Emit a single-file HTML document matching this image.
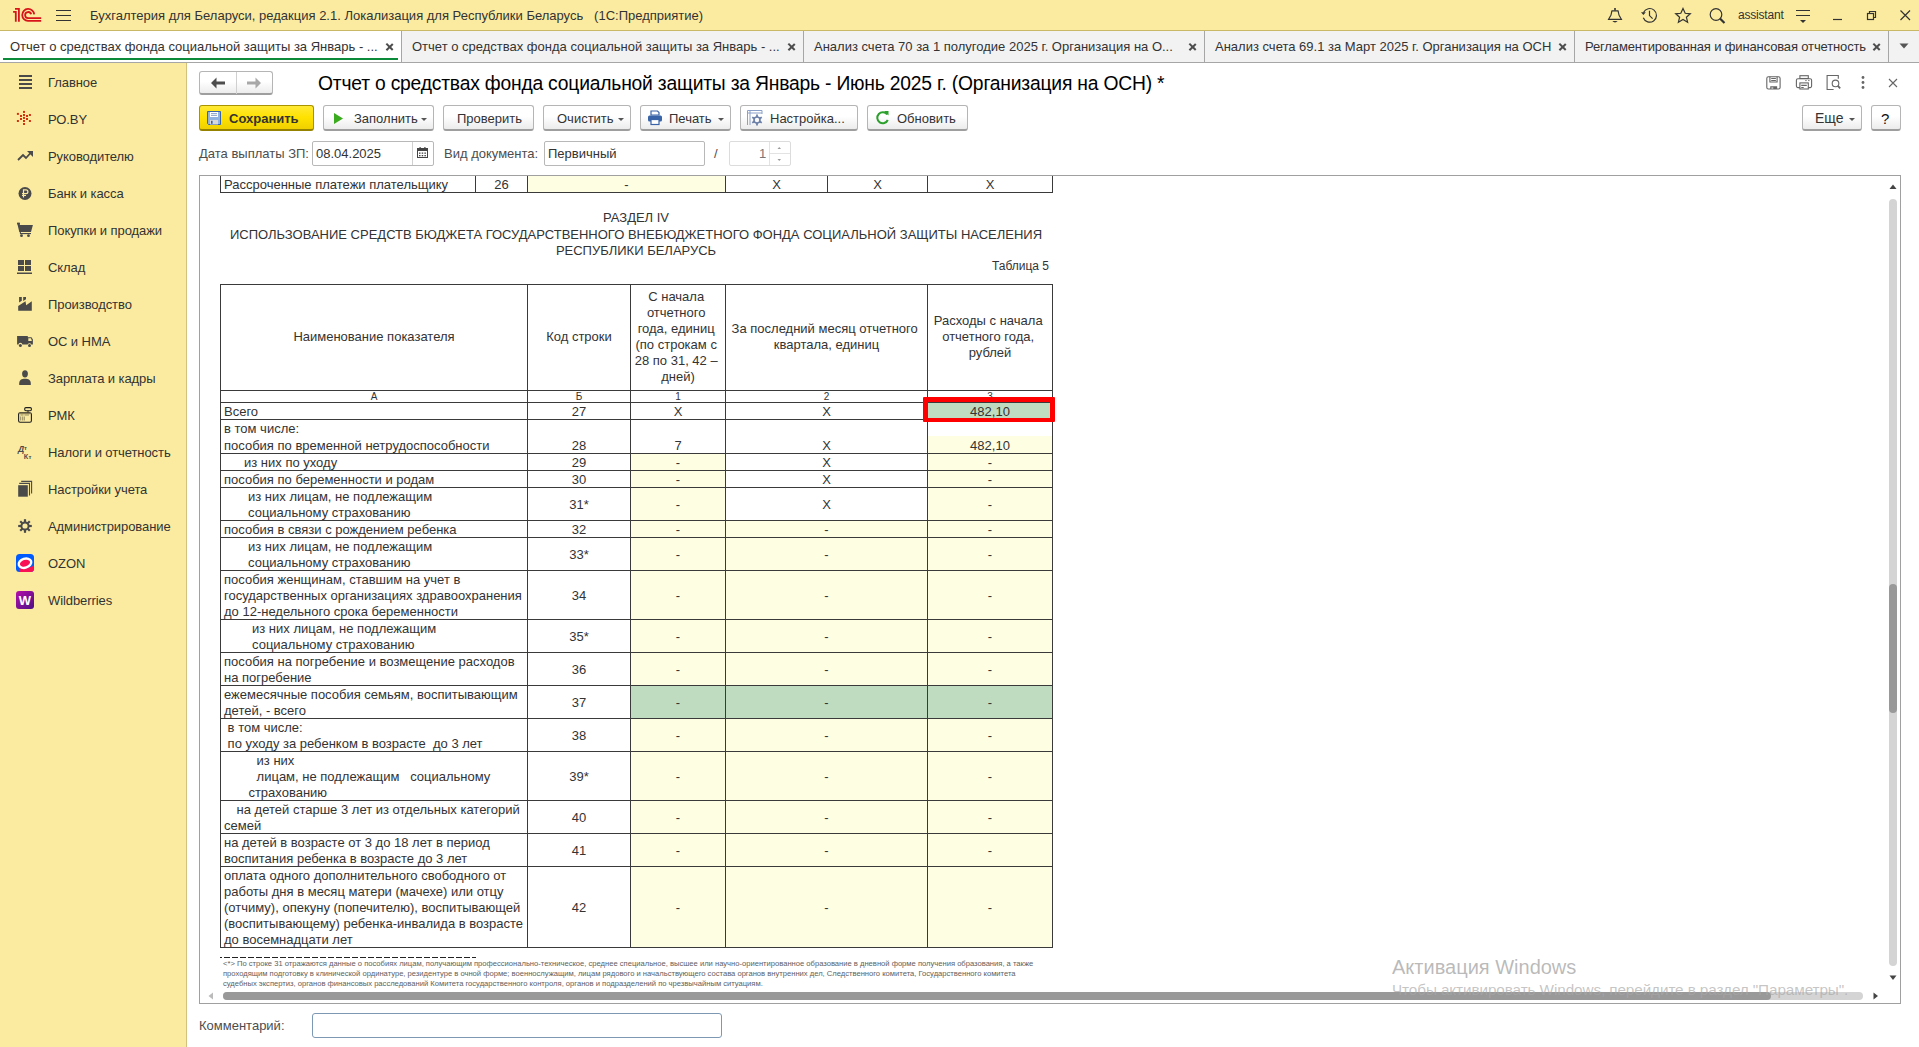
<!DOCTYPE html><html><head><meta charset="utf-8"><title>1C</title><style>
*{box-sizing:border-box}
body{margin:0;width:1919px;height:1047px;overflow:hidden;position:relative;font-family:"Liberation Sans",sans-serif;font-size:13px;color:#333;background:#fff}
.a{position:absolute}
.t{white-space:pre}
.btn{position:absolute;height:26px;border:1px solid #b5b5b5;border-bottom:2px solid #9e9e9e;border-radius:3px;background:linear-gradient(#ffffff,#ffffff 45%,#ececec)}
.cell{position:absolute;display:flex;align-items:center;justify-content:center;text-align:center;line-height:16px;white-space:pre;color:#333}
.l{justify-content:flex-start;text-align:left}
.b{align-items:flex-end}
.hl{position:absolute;height:1px;background:#3a3a3a}
.vl{position:absolute;width:1px;background:#3a3a3a}
.x{position:absolute;width:8px;height:8px}
.x:before,.x:after{content:"";position:absolute;left:-1px;top:2.6px;width:9.4px;height:1.9px;background:#4d4d4d;transform:rotate(45deg)}
.x:after{transform:rotate(-45deg)}
</style></head><body>
<div class="a" style="left:0px;top:0px;width:1919px;height:30px;background:#fbeba0"></div>
<div class="a" style="left:0px;top:30px;width:1919px;height:1px;background:#c9b866"></div>
<svg class="a" style="left:0;top:0" width="50" height="30" viewBox="0 0 50 30">
<g fill="none" stroke="#d7141a" stroke-width="1.8">
<path d="M13.1 11.9 H15.8 V21.8"/>
<path d="M15 8.9 H18.9 V21.8"/>
<path d="M34.2 14.3 A6 6 0 1 0 28 20.9 H41.2"/>
<path d="M31.2 14.3 A3.1 3.1 0 1 0 28.1 18.2 H41.2"/>
</g></svg>
<div class="a" style="left:56px;top:10px;width:15px;height:1px;background:#333"></div>
<div class="a" style="left:56px;top:15px;width:15px;height:1px;background:#333"></div>
<div class="a" style="left:56px;top:20px;width:15px;height:1px;background:#333"></div>
<div class="a t" style="left:90px;top:9px;font-size:13px;line-height:1;color:#333">Бухгалтерия для Беларуси, редакция 2.1. Локализация для Республики Беларусь   (1С:Предприятие)</div>
<svg class="a" style="left:1600px;top:0" width="319" height="30" viewBox="1600 0 319 30">
<g fill="none" stroke="#333" stroke-width="1.2">
<path d="M1608.6 19.3 L1610.9 15.3 C1611.4 14.2 1611.4 12 1612 10.9 H1618 C1618.6 12 1618.6 14.2 1619.1 15.3 L1621.4 19.3 Z"/>
<path d="M1643.5 12.5 A6.8 6.8 0 1 1 1643.3 17.7"/>
<path d="M1649.5 10.8 V15.6 L1652.6 18.6"/>
<path d="M1683 8.5 L1685.2 13.3 L1690.3 13.8 L1686.4 17.2 L1687.6 22.2 L1683 19.5 L1678.4 22.2 L1679.6 17.2 L1675.7 13.8 L1680.8 13.3 Z"/>
<circle cx="1716" cy="14.5" r="5.8"/>
</g>
<path d="M1612.3 21.1 H1617.7 Q1615 23.8 1612.3 21.1 Z" fill="#333"/>
<rect x="1614.2" y="8" width="1.6" height="2.5" fill="#333"/>
<path d="M1641 12.2 H1645.8 L1643.4 14.9 Z" fill="#333"/>
<path d="M1720 18.5 L1724.5 23" stroke="#333" stroke-width="2.2"/>
<g stroke="#333" stroke-width="1.2" fill="none">
<path d="M1796 10.5 H1810 M1796 15.5 H1810"/>
<path d="M1833 19.5 H1842"/>
<rect x="1867.5" y="13.5" width="6" height="6"/>
<path d="M1869.5 13.5 V11.5 H1875.5 V17.5 H1873.5"/>
<path d="M1900.5 10.5 L1910 20 M1910 10.5 L1900.5 20"/>
</g>
<path d="M1800 20 H1806 L1803 23 Z" fill="#333"/>
</svg>
<div class="a t" style="left:1738px;top:9px;font-size:12px;line-height:1;color:#333;letter-spacing:-0.2px">assistant</div>
<div class="a" style="left:0px;top:31px;width:1919px;height:31px;background:#f2f2f2"></div>
<div class="a" style="left:0px;top:31px;width:401px;height:31px;background:#fff"></div>
<div class="a" style="left:0px;top:62px;width:1919px;height:1px;background:#a6a6a6"></div>
<div class="a" style="left:3px;top:58px;width:395px;height:2px;background:#0b8a3a"></div>
<div class="a" style="left:401px;top:31px;width:1px;height:31px;background:#a6a6a6"></div>
<div class="a" style="left:803px;top:31px;width:1px;height:31px;background:#a6a6a6"></div>
<div class="a" style="left:1204px;top:31px;width:1px;height:31px;background:#a6a6a6"></div>
<div class="a" style="left:1574px;top:31px;width:1px;height:31px;background:#a6a6a6"></div>
<div class="a" style="left:1888px;top:31px;width:1px;height:31px;background:#a6a6a6"></div>
<div class="a t" style="left:10px;top:40px;font-size:13px;line-height:1;color:#333">Отчет о средствах фонда социальной защиты за Январь - ...</div>
<div class="x" style="left:386px;top:43px"></div>
<div class="a t" style="left:412px;top:40px;font-size:13px;line-height:1;color:#333">Отчет о средствах фонда социальной защиты за Январь - ...</div>
<div class="x" style="left:788px;top:43px"></div>
<div class="a t" style="left:814px;top:40px;font-size:13px;line-height:1;color:#333">Анализ счета 70 за 1 полугодие 2025 г. Организация на О...</div>
<div class="x" style="left:1189px;top:43px"></div>
<div class="a t" style="left:1215px;top:40px;font-size:13px;line-height:1;color:#333">Анализ счета 69.1 за Март 2025 г. Организация на ОСН</div>
<div class="x" style="left:1559px;top:43px"></div>
<div class="a t" style="left:1585px;top:40px;font-size:13px;line-height:1;color:#333;letter-spacing:-0.14px">Регламентированная и финансовая отчетность</div>
<div class="x" style="left:1873px;top:43px"></div>
<svg class="a" style="left:1899px;top:43px" width="10" height="6"><path d="M0.5 0.5 H9.5 L5 5.5 Z" fill="#555"/></svg>
<div class="a" style="left:0px;top:63px;width:186px;height:984px;background:#fbeba0"></div>
<div class="a" style="left:186px;top:63px;width:1px;height:984px;background:#d2c27e"></div>
<div class="a t" style="left:48px;top:76px;font-size:13px;line-height:1;color:#333;letter-spacing:-0.08px">Главное</div>
<div class="a t" style="left:48px;top:113px;font-size:13px;line-height:1;color:#333;letter-spacing:-0.08px">РО.BY</div>
<div class="a t" style="left:48px;top:150px;font-size:13px;line-height:1;color:#333;letter-spacing:-0.08px">Руководителю</div>
<div class="a t" style="left:48px;top:187px;font-size:13px;line-height:1;color:#333;letter-spacing:-0.08px">Банк и касса</div>
<div class="a t" style="left:48px;top:224px;font-size:13px;line-height:1;color:#333;letter-spacing:-0.08px">Покупки и продажи</div>
<div class="a t" style="left:48px;top:261px;font-size:13px;line-height:1;color:#333;letter-spacing:-0.08px">Склад</div>
<div class="a t" style="left:48px;top:298px;font-size:13px;line-height:1;color:#333;letter-spacing:-0.08px">Производство</div>
<div class="a t" style="left:48px;top:335px;font-size:13px;line-height:1;color:#333;letter-spacing:-0.08px">ОС и НМА</div>
<div class="a t" style="left:48px;top:372px;font-size:13px;line-height:1;color:#333;letter-spacing:-0.08px">Зарплата и кадры</div>
<div class="a t" style="left:48px;top:409px;font-size:13px;line-height:1;color:#333;letter-spacing:-0.08px">РМК</div>
<div class="a t" style="left:48px;top:446px;font-size:13px;line-height:1;color:#333;letter-spacing:-0.08px">Налоги и отчетность</div>
<div class="a t" style="left:48px;top:483px;font-size:13px;line-height:1;color:#333;letter-spacing:-0.08px">Настройки учета</div>
<div class="a t" style="left:48px;top:520px;font-size:13px;line-height:1;color:#333;letter-spacing:-0.08px">Администрирование</div>
<div class="a t" style="left:48px;top:557px;font-size:13px;line-height:1;color:#333;letter-spacing:-0.08px">OZON</div>
<div class="a t" style="left:48px;top:594px;font-size:13px;line-height:1;color:#333;letter-spacing:-0.08px">Wildberries</div>
<svg class="a" style="left:0;top:0" width="186" height="640" viewBox="0 0 186 640"><rect x="19" y="75" width="13" height="2" fill="#4a4a4a"/><rect x="19" y="79" width="13" height="2" fill="#4a4a4a"/><rect x="19" y="83" width="13" height="2" fill="#4a4a4a"/><rect x="19" y="87" width="13" height="2" fill="#4a4a4a"/><rect x="23" y="110.9" width="2" height="2" fill="#d2300f"/><rect x="16.9" y="112.9" width="2" height="2" fill="#d2300f"/><rect x="28.9" y="114" width="2" height="2" fill="#d2300f"/><rect x="20" y="115" width="2" height="2" fill="#d2300f"/><rect x="23" y="114" width="2" height="2" fill="#d2300f"/><rect x="26" y="115" width="2" height="2" fill="#d2300f"/><rect x="20" y="118" width="2" height="2" fill="#d2300f"/><rect x="23" y="116.9" width="2" height="2" fill="#d2300f"/><rect x="26" y="118" width="2" height="2" fill="#d2300f"/><rect x="16.9" y="120" width="2" height="2" fill="#d2300f"/><rect x="28.9" y="120" width="2" height="2" fill="#d2300f"/><rect x="23" y="120" width="2" height="2" fill="#d2300f"/><rect x="23" y="123" width="2" height="2" fill="#d2300f"/><path d="M18 160 L23 155 L26 158 L31 152.5" fill="none" stroke="#4a4a4a" stroke-width="1.8"/><path d="M27 151 H33 V157 Z" fill="#4a4a4a"/><circle cx="25" cy="193.5" r="6.5" fill="#4a4a4a"/><path d="M23.5 197.5 V189.8 H26 A1.9 1.9 0 0 1 26 193.6 H22 M22 195.5 H26" fill="none" stroke="#fbeba0" stroke-width="1.2"/><path d="M17.1 222.8 H19.8 V225 H32.9 L31 231.9 H19.3 Z" fill="#4a4a4a"/><rect x="17.1" y="222.8" width="2.7" height="1.6" fill="#4a4a4a"/><rect x="20" y="233" width="11" height="1.1" fill="#4a4a4a"/><rect x="19.8" y="231.5" width="1.1" height="2" fill="#4a4a4a"/><circle cx="21.5" cy="235.7" r="1.4" fill="#4a4a4a"/><circle cx="28.5" cy="235.7" r="1.4" fill="#4a4a4a"/><rect x="18" y="260" width="6" height="5" fill="#4a4a4a"/><rect x="25" y="260" width="6" height="5" fill="#4a4a4a"/><rect x="18" y="266" width="6" height="5" fill="#4a4a4a"/><rect x="25" y="266" width="6" height="5" fill="#4a4a4a"/><rect x="17" y="272.5" width="15" height="1.5" fill="#4a4a4a"/><path d="M18.2 310.8 V306 L25.5 301.2 L26.2 305.2 L31.8 301.2 V310.8 Z" fill="#4a4a4a"/><path d="M19.1 297.1 H21.8 V300.8 L19.1 302.6 Z M23.2 297.1 H26 V299.2 L23.2 300.9 Z" fill="#4a4a4a"/><path d="M17.1 336.1 H27.8 V337.2 H31.5 L32.9 339.5 V344.6 H31.3 A1.9 1.9 0 0 0 27.7 344.6 H22.3 A1.9 1.9 0 0 0 18.5 344.6 H17.1 Z" fill="#4a4a4a"/><path d="M28.3 338.2 H31 L31.9 340.9 H28.3 Z" fill="#fbeba0"/><circle cx="20.4" cy="345.4" r="1.5" fill="#4a4a4a"/><circle cx="29.5" cy="345.4" r="1.5" fill="#4a4a4a"/><ellipse cx="25" cy="373.8" rx="2.9" ry="3.6" fill="#4a4a4a"/><path d="M19.2 385 V383.5 C19.2 380.2 21.5 378.8 25 378.8 C28.5 378.8 30.8 380.2 30.8 383.5 V385 Z" fill="#4a4a4a"/><rect x="18.6" y="412.7" width="12.8" height="9.5" rx="1.5" fill="none" stroke="#1e1e1e" stroke-width="1.1"/><rect x="24.7" y="407.6" width="6.7" height="3.2" rx="1.2" fill="none" stroke="#1e1e1e" stroke-width="1.1"/><rect x="27.5" y="410.6" width="1" height="2" fill="#1e1e1e"/><path d="M19.5 413.5 H30.5" stroke="#8a7f55" stroke-width="1.4"/><path d="M20.5 415 H23.5 M24.5 415 H29" stroke="#9a8f60" stroke-width="1.2"/><path d="M20.7 416.5 V420.5 M22.7 416.5 V420.5 M24.3 416.5 V420.5" stroke="#8a7f55" stroke-width="0.9"/><text x="18" y="451.6" font-family="Liberation Sans" font-size="8.5" font-style="italic" font-weight="bold" fill="#4a4a4a">Д</text><text x="24" y="450.2" font-family="Liberation Sans" font-size="6" font-weight="bold" fill="#4a4a4a">т</text><text x="23.8" y="458.8" font-family="Liberation Sans" font-size="7.2" font-weight="bold" fill="#4a4a4a">К</text><text x="28.6" y="458.8" font-family="Liberation Sans" font-size="6" font-weight="bold" fill="#4a4a4a">т</text><rect x="18.2" y="485.2" width="9.6" height="11.5" fill="#4a4a4a"/><path d="M19.2 483.4 H29.5 V495.6 M21.2 481.4 H31.6 V493.4" fill="none" stroke="#4a4a4a" stroke-width="1.1"/><g transform="translate(25 526)"><circle r="3.6" fill="none" stroke="#4a4a4a" stroke-width="2"/><rect x="-1.1" y="-6.8" width="2.2" height="3" fill="#4a4a4a" transform="rotate(0)"/><rect x="-1.1" y="-6.8" width="2.2" height="3" fill="#4a4a4a" transform="rotate(45)"/><rect x="-1.1" y="-6.8" width="2.2" height="3" fill="#4a4a4a" transform="rotate(90)"/><rect x="-1.1" y="-6.8" width="2.2" height="3" fill="#4a4a4a" transform="rotate(135)"/><rect x="-1.1" y="-6.8" width="2.2" height="3" fill="#4a4a4a" transform="rotate(180)"/><rect x="-1.1" y="-6.8" width="2.2" height="3" fill="#4a4a4a" transform="rotate(225)"/><rect x="-1.1" y="-6.8" width="2.2" height="3" fill="#4a4a4a" transform="rotate(270)"/><rect x="-1.1" y="-6.8" width="2.2" height="3" fill="#4a4a4a" transform="rotate(315)"/></g><clipPath id="oz"><rect x="16" y="554" width="18" height="18" rx="3.5"/></clipPath><g clip-path="url(#oz)"><rect x="16" y="554" width="18" height="18" fill="#005bff"/><path d="M19.2 573 V568.2 C25 568.8 30 567.5 34 565.5 V573 Z" fill="#f91155"/><ellipse cx="25" cy="563.2" rx="6.4" ry="4.5" fill="#f91155" stroke="#fff" stroke-width="2.4" transform="rotate(-18 25 563.2)"/></g><defs><linearGradient id="wb" x1="0" y1="0" x2="1" y2="1"><stop offset="0" stop-color="#b50fa9"/><stop offset="1" stop-color="#4b1183"/></linearGradient></defs><rect x="16" y="591" width="18" height="18" rx="3" fill="url(#wb)"/><text x="25" y="605" text-anchor="middle" font-family="Liberation Sans" font-weight="bold" font-size="13" fill="#fff">W</text></svg>
<div class="btn" style="left:199px;top:71px;width:74px;height:24px"></div>
<div class="a" style="left:236px;top:72px;width:1px;height:22px;background:#d0d0d0"></div>
<svg class="a" style="left:208px;top:76px" width="60" height="14"><path d="M3 7 L8.5 1.5 V5.5 H17 V8.5 H8.5 V12.5 Z" fill="#4d4d4d"/><path d="M53 7 L47.5 1.5 V5.5 H39 V8.5 H47.5 V12.5 Z" fill="#a8a8a8"/></svg>
<div class="a t" style="left:318px;top:74px;font-size:19.3px;line-height:1;color:#000;letter-spacing:-0.2px">Отчет о средствах фонда социальной защиты за Январь - Июнь 2025 г. (Организация на ОСН) *</div>
<svg class="a" style="left:1760px;top:70px" width="150" height="28" viewBox="1760 70 150 28">
<g fill="none" stroke="#666" stroke-width="1.1">
<rect x="1766.8" y="76.8" width="13.3" height="12.2" rx="1.6"/>
<path d="M1769.9 76.8 V82 H1777.1 V76.8"/>
<path d="M1771.2 78.5 H1775.9 M1771.2 80.5 H1775.9"/>
<path d="M1770.8 89 V86.9 H1776.6 V89"/>
<rect x="1799.9" y="75.7" width="8.4" height="2.8"/>
<path d="M1799.9 87.6 H1797.9 A1.5 1.5 0 0 1 1796.4 86.1 V80.2 A1.5 1.5 0 0 1 1797.9 78.7 H1810.1 A1.5 1.5 0 0 1 1811.6 80.2 V86.1 A1.5 1.5 0 0 1 1810.1 87.6 H1808.3"/>
<rect x="1799.9" y="82.9" width="8.4" height="6.1"/>
<path d="M1801.2 85.4 H1806.8 M1801.2 87.5 H1803.7"/>
<path d="M1833.6 89.5 H1827.1 V75.5 H1838.3 V78.7"/>
<circle cx="1835.5" cy="83.4" r="3.3"/>
<path d="M1837.9 85.9 L1840.2 88.3" stroke-width="1.8"/>
<path d="M1889 79 L1897 87 M1897 79 L1889 87"/>
</g>
<rect x="1773.3" y="87" width="3" height="2" fill="#666"/>
<path d="M1805.3 80.6 H1806.6 M1808.2 80.6 H1809.5" stroke="#666" stroke-width="1"/>
<circle cx="1863" cy="77.5" r="1.4" fill="#666"/><circle cx="1863" cy="82.5" r="1.4" fill="#666"/><circle cx="1863" cy="87.5" r="1.4" fill="#666"/>
</svg>
<div class="a" style="left:199px;top:105px;width:115px;height:26px;border:1px solid #a99400;border-bottom:2px solid #958300;border-radius:3px;background:linear-gradient(#ffe936,#ffe200 50%,#f0d000)"></div>
<svg class="a" style="left:207px;top:111px" width="15" height="15" viewBox="0 0 15 15">
<path d="M0.5 0.5 H13.5 V13.5 H1.5 L0.5 12.5 Z" fill="#8fb2e0" stroke="#3a64a8" stroke-width="1"/>
<rect x="3" y="1" width="8" height="5" fill="#fff"/><path d="M4 2.6 H10 M4 4.4 H10" stroke="#6b8cc0" stroke-width="0.8"/>
<rect x="3" y="9" width="8" height="4.5" fill="#d8d8d8"/><rect x="4" y="9.8" width="1.6" height="3" fill="#3a64a8"/>
</svg>
<div class="a t" style="left:229px;top:112px;font-size:13px;line-height:1;color:#333;font-weight:bold">Сохранить</div>
<div class="btn" style="left:323px;top:105px;width:111px"></div>
<div class="a t" style="left:354px;top:112px;font-size:13px;line-height:1;color:#333">Заполнить</div>
<svg class="a" style="left:421px;top:118px" width="7" height="4"><path d="M0 0 H6 L3 3 Z" fill="#555"/></svg>
<svg class="a" style="left:333px;top:112px" width="11" height="13"><path d="M1 1 L10 6.5 L1 12 Z" fill="#3aaa1e"/></svg>
<div class="btn" style="left:443px;top:105px;width:91px"></div>
<div class="a t" style="left:457px;top:112px;font-size:13px;line-height:1;color:#333">Проверить</div>
<div class="btn" style="left:543px;top:105px;width:88px"></div>
<div class="a t" style="left:557px;top:112px;font-size:13px;line-height:1;color:#333">Очистить</div>
<svg class="a" style="left:618px;top:118px" width="7" height="4"><path d="M0 0 H6 L3 3 Z" fill="#555"/></svg>
<div class="btn" style="left:640px;top:105px;width:91px"></div>
<div class="a t" style="left:669px;top:112px;font-size:13px;line-height:1;color:#333">Печать</div>
<svg class="a" style="left:718px;top:118px" width="7" height="4"><path d="M0 0 H6 L3 3 Z" fill="#555"/></svg>
<svg class="a" style="left:647px;top:110px" width="16" height="16" viewBox="0 0 16 16"><path d="M4 1 H10.5 L12 2.5 V5 H4 Z" fill="none" stroke="#3a64a8" stroke-width="1.2"/><rect x="1" y="5.5" width="14" height="6" rx="1.5" fill="#3a64a8"/><rect x="4" y="9.5" width="8" height="5" fill="#fff" stroke="#3a64a8" stroke-width="1.2"/></svg>
<div class="btn" style="left:740px;top:105px;width:118px"></div>
<div class="a t" style="left:770px;top:112px;font-size:13px;line-height:1;color:#333">Настройка...</div>
<svg class="a" style="left:747px;top:110px" width="18" height="16" viewBox="0 0 18 16"><path d="M0.5 15 V0.5 H15 V4" fill="none" stroke="#8aa0c8" stroke-width="1"/><path d="M0.5 3 H15 M3 0.5 V15" stroke="#8aa0c8" stroke-width="1" fill="none"/><g transform="translate(10 10)"><circle r="3" fill="none" stroke="#6a7fa8" stroke-width="1.6"/><g fill="#6a7fa8"><rect x="-0.9" y="-5.5" width="1.8" height="2.5"/><rect x="-0.9" y="-5.5" width="1.8" height="2.5" transform="rotate(60)"/><rect x="-0.9" y="-5.5" width="1.8" height="2.5" transform="rotate(120)"/><rect x="-0.9" y="-5.5" width="1.8" height="2.5" transform="rotate(180)"/><rect x="-0.9" y="-5.5" width="1.8" height="2.5" transform="rotate(240)"/><rect x="-0.9" y="-5.5" width="1.8" height="2.5" transform="rotate(300)"/></g></g></svg>
<div class="btn" style="left:867px;top:105px;width:101px"></div>
<div class="a t" style="left:897px;top:112px;font-size:13px;line-height:1;color:#333">Обновить</div>
<svg class="a" style="left:875px;top:110px" width="15" height="16" viewBox="0 0 15 16"><path d="M12.2 4.5 A5.5 5.5 0 1 0 12.8 10" fill="none" stroke="#2ca02c" stroke-width="2"/><path d="M9 1 L13.5 1 V5.5 Z" fill="#2ca02c"/></svg>
<div class="btn" style="left:1802px;top:105px;width:60px"></div>
<div class="a t" style="left:1815px;top:111px;font-size:14px;line-height:1;color:#333">Еще</div>
<svg class="a" style="left:1849px;top:118px" width="7" height="4"><path d="M0 0 H6 L3 3 Z" fill="#555"/></svg>
<div class="btn" style="left:1871px;top:105px;width:30px"></div>
<div class="a t" style="left:1881px;top:111px;font-size:15px;line-height:1;color:#111">?</div>
<div class="a t" style="left:199px;top:147px;font-size:13px;line-height:1;color:#4d4d4d">Дата выплаты ЗП:</div>
<div class="a" style="left:312px;top:141px;width:122px;height:25px;border:1px solid #b8b8b8;border-radius:2px;background:#fff"></div>
<div class="a" style="left:412px;top:142px;width:1px;height:23px;background:#d0d0d0"></div>
<div class="a t" style="left:316px;top:147px;font-size:13px;line-height:1;color:#333">08.04.2025</div>
<svg class="a" style="left:417px;top:147px" width="12" height="12" viewBox="0 0 12 12"><rect x="0.5" y="1.5" width="10" height="9" fill="none" stroke="#444" stroke-width="1"/><rect x="0.5" y="1.5" width="10" height="2.5" fill="#444"/><rect x="2.5" y="0" width="1.2" height="2" fill="#444"/><rect x="7.3" y="0" width="1.2" height="2" fill="#444"/><g fill="#444"><rect x="2" y="5.5" width="1.5" height="1.3"/><rect x="4.7" y="5.5" width="1.5" height="1.3"/><rect x="7.4" y="5.5" width="1.5" height="1.3"/><rect x="2" y="8" width="1.5" height="1.3"/><rect x="4.7" y="8" width="1.5" height="1.3"/><rect x="7.4" y="8" width="1.5" height="1.3"/></g></svg>
<div class="a t" style="left:444px;top:147px;font-size:13px;line-height:1;color:#4d4d4d">Вид документа:</div>
<div class="a" style="left:544px;top:141px;width:161px;height:25px;border:1px solid #b8b8b8;border-radius:2px;background:#fff"></div>
<div class="a t" style="left:548px;top:147px;font-size:13px;line-height:1;color:#333">Первичный</div>
<div class="a t" style="left:714px;top:147px;font-size:13px;line-height:1;color:#4d4d4d">/</div>
<div class="a" style="left:729px;top:141px;width:62px;height:25px;border:1px solid #dcdcdc;border-radius:2px;background:#fff"></div>
<div class="a" style="left:769px;top:142px;width:1px;height:23px;background:#e3e3e3"></div>
<div class="a" style="left:770px;top:153px;width:20px;height:1px;background:#e3e3e3"></div>
<div class="a t" style="left:759px;top:147px;font-size:13px;line-height:1;color:#777">1</div>
<svg class="a" style="left:776px;top:146px" width="7" height="18"><path d="M1.5 3 H5 L3.25 1 Z M1.5 13 H5 L3.25 15 Z" fill="#999"/></svg>
<div class="a" style="left:199px;top:175px;width:1702px;height:829px;border:1px solid #a0a0a0;background:#fff"></div>
<div class="a" style="left:200px;top:176px;width:1700px;height:827px;overflow:hidden" id="sheet">
<div class="cell l" style="left:21px;top:-1px;width:254px;height:17px;padding-left:3px"><span style="position:relative;top:1px">Рассроченные платежи плательщику</span></div>
<div class="cell " style="left:276px;top:-1px;width:51px;height:17px"><span style="position:relative;top:1px">26</span></div>
<div class="cell " style="left:328px;top:-1px;width:197px;height:17px;background:#fefee2"><span style="position:relative;top:1px">-</span></div>
<div class="cell " style="left:526px;top:-1px;width:101px;height:17px"><span style="position:relative;top:1px">X</span></div>
<div class="cell " style="left:628px;top:-1px;width:99px;height:17px"><span style="position:relative;top:1px">X</span></div>
<div class="cell " style="left:728px;top:-1px;width:124px;height:17px"><span style="position:relative;top:1px">X</span></div>
<div class="hl" style="left:20px;top:16px;width:833px"></div>
<div class="vl" style="left:20px;top:-1px;height:18px"></div>
<div class="vl" style="left:275px;top:-1px;height:18px"></div>
<div class="vl" style="left:327px;top:-1px;height:18px"></div>
<div class="vl" style="left:525px;top:-1px;height:18px"></div>
<div class="vl" style="left:627px;top:-1px;height:18px"></div>
<div class="vl" style="left:727px;top:-1px;height:18px"></div>
<div class="vl" style="left:852px;top:-1px;height:18px"></div>
<div class="a t" style="left:20px;top:34px;width:832px;text-align:center;line-height:16.5px;color:#333">РАЗДЕЛ IV
ИСПОЛЬЗОВАНИЕ СРЕДСТВ БЮДЖЕТА ГОСУДАРСТВЕННОГО ВНЕБЮДЖЕТНОГО ФОНДА СОЦИАЛЬНОЙ ЗАЩИТЫ НАСЕЛЕНИЯ
РЕСПУБЛИКИ БЕЛАРУСЬ</div>
<div class="a t" style="left:700px;top:84px;width:149px;text-align:right;font-size:12px;line-height:12px;color:#333">Таблица 5</div>
<div class="cell " style="left:21px;top:109px;width:306px;height:105px"><span style="position:relative;top:-1px">Наименование показателя</span></div>
<div class="cell " style="left:328px;top:109px;width:102px;height:105px"><span style="position:relative;top:-1px">Код строки</span></div>
<div class="cell " style="left:431px;top:109px;width:94px;height:105px"><span style="position:relative;top:-1px">С начала 
отчетного 
года, единиц 
(по строкам с 
28 по 31, 42 – 
дней)</span></div>
<div class="cell " style="left:526px;top:109px;width:201px;height:105px"><span style="position:relative;top:-1px">За последний месяц отчетного 
квартала, единиц</span></div>
<div class="cell " style="left:728px;top:109px;width:124px;height:105px"><span style="position:relative;top:-1px">Расходы с начала 
отчетного года, 
рублей</span></div>
<div class="cell " style="left:21px;top:215px;width:306px;height:11px;font-size:10px;line-height:11px;align-items:flex-start"><span style="position:relative;top:0px">А</span></div>
<div class="cell " style="left:328px;top:215px;width:102px;height:11px;font-size:10px;line-height:11px;align-items:flex-start"><span style="position:relative;top:0px">Б</span></div>
<div class="cell " style="left:431px;top:215px;width:94px;height:11px;font-size:10px;line-height:11px;align-items:flex-start"><span style="position:relative;top:0px">1</span></div>
<div class="cell " style="left:526px;top:215px;width:201px;height:11px;font-size:10px;line-height:11px;align-items:flex-start"><span style="position:relative;top:0px">2</span></div>
<div class="cell " style="left:728px;top:215px;width:124px;height:11px;font-size:10px;line-height:11px;align-items:flex-start"><span style="position:relative;top:0px">3</span></div>
<div class="cell l" style="left:21px;top:227px;width:306px;height:16px;padding-left:3px"><span style="position:relative;top:1px">Всего</span></div>
<div class="cell " style="left:328px;top:227px;width:102px;height:16px"><span style="position:relative;top:1px">27</span></div>
<div class="cell " style="left:431px;top:227px;width:94px;height:16px"><span style="position:relative;top:1px">X</span></div>
<div class="cell " style="left:526px;top:227px;width:201px;height:16px"><span style="position:relative;top:1px">X</span></div>
<div class="cell " style="left:728px;top:227px;width:124px;height:16px;background:#c0dcc0"><span style="position:relative;top:1px">482,10</span></div>
<div class="cell l" style="left:21px;top:244px;width:306px;height:33px;padding-left:3px;align-items:flex-start;line-height:17px"><span style="position:relative;top:0px">в том числе:
пособия по временной нетрудоспособности</span></div>
<div class="cell b" style="left:328px;top:244px;width:102px;height:33px"><span style="position:relative;top:1px">28</span></div>
<div class="cell b" style="left:431px;top:244px;width:94px;height:33px"><span style="position:relative;top:1px">7</span></div>
<div class="cell b" style="left:526px;top:244px;width:201px;height:33px"><span style="position:relative;top:1px">X</span></div>
<div class="a" style="left:728px;top:260px;width:124px;height:17px;background:#fefee2"></div>
<div class="cell b" style="left:728px;top:244px;width:124px;height:33px"><span style="position:relative;top:1px">482,10</span></div>
<div class="cell l" style="left:21px;top:278px;width:306px;height:16px;padding-left:23px"><span style="position:relative;top:1px">из них по уходу</span></div>
<div class="cell " style="left:328px;top:278px;width:102px;height:16px"><span style="position:relative;top:1px">29</span></div>
<div class="cell " style="left:431px;top:278px;width:94px;height:16px;background:#fefee2"><span style="position:relative;top:1px">-</span></div>
<div class="cell " style="left:526px;top:278px;width:201px;height:16px"><span style="position:relative;top:1px">X</span></div>
<div class="cell " style="left:728px;top:278px;width:124px;height:16px;background:#fefee2"><span style="position:relative;top:1px">-</span></div>
<div class="cell l" style="left:21px;top:295px;width:306px;height:16px;padding-left:3px"><span style="position:relative;top:1px">пособия по беременности и родам</span></div>
<div class="cell " style="left:328px;top:295px;width:102px;height:16px"><span style="position:relative;top:1px">30</span></div>
<div class="cell " style="left:431px;top:295px;width:94px;height:16px;background:#fefee2"><span style="position:relative;top:1px">-</span></div>
<div class="cell " style="left:526px;top:295px;width:201px;height:16px"><span style="position:relative;top:1px">X</span></div>
<div class="cell " style="left:728px;top:295px;width:124px;height:16px;background:#fefee2"><span style="position:relative;top:1px">-</span></div>
<div class="cell l" style="left:21px;top:312px;width:306px;height:32px;padding-left:27px"><span style="position:relative;top:1px">из них лицам, не подлежащим
социальному страхованию</span></div>
<div class="cell " style="left:328px;top:312px;width:102px;height:32px"><span style="position:relative;top:1px">31*</span></div>
<div class="cell " style="left:431px;top:312px;width:94px;height:32px;background:#fefee2"><span style="position:relative;top:1px">-</span></div>
<div class="cell " style="left:526px;top:312px;width:201px;height:32px"><span style="position:relative;top:1px">X</span></div>
<div class="cell " style="left:728px;top:312px;width:124px;height:32px;background:#fefee2"><span style="position:relative;top:1px">-</span></div>
<div class="cell l" style="left:21px;top:345px;width:306px;height:16px;padding-left:3px"><span style="position:relative;top:1px">пособия в связи с рождением ребенка</span></div>
<div class="cell " style="left:328px;top:345px;width:102px;height:16px"><span style="position:relative;top:1px">32</span></div>
<div class="cell " style="left:431px;top:345px;width:94px;height:16px;background:#fefee2"><span style="position:relative;top:1px">-</span></div>
<div class="cell " style="left:526px;top:345px;width:201px;height:16px;background:#fefee2"><span style="position:relative;top:1px">-</span></div>
<div class="cell " style="left:728px;top:345px;width:124px;height:16px;background:#fefee2"><span style="position:relative;top:1px">-</span></div>
<div class="cell l" style="left:21px;top:362px;width:306px;height:32px;padding-left:27px"><span style="position:relative;top:1px">из них лицам, не подлежащим
социальному страхованию</span></div>
<div class="cell " style="left:328px;top:362px;width:102px;height:32px"><span style="position:relative;top:1px">33*</span></div>
<div class="cell " style="left:431px;top:362px;width:94px;height:32px;background:#fefee2"><span style="position:relative;top:1px">-</span></div>
<div class="cell " style="left:526px;top:362px;width:201px;height:32px;background:#fefee2"><span style="position:relative;top:1px">-</span></div>
<div class="cell " style="left:728px;top:362px;width:124px;height:32px;background:#fefee2"><span style="position:relative;top:1px">-</span></div>
<div class="cell l" style="left:21px;top:395px;width:306px;height:48px;padding-left:3px"><span style="position:relative;top:1px">пособия женщинам, ставшим на учет в
государственных организациях здравоохранения
до 12-недельного срока беременности</span></div>
<div class="cell " style="left:328px;top:395px;width:102px;height:48px"><span style="position:relative;top:1px">34</span></div>
<div class="cell " style="left:431px;top:395px;width:94px;height:48px;background:#fefee2"><span style="position:relative;top:1px">-</span></div>
<div class="cell " style="left:526px;top:395px;width:201px;height:48px;background:#fefee2"><span style="position:relative;top:1px">-</span></div>
<div class="cell " style="left:728px;top:395px;width:124px;height:48px;background:#fefee2"><span style="position:relative;top:1px">-</span></div>
<div class="cell l" style="left:21px;top:444px;width:306px;height:32px;padding-left:31px"><span style="position:relative;top:1px">из них лицам, не подлежащим
социальному страхованию</span></div>
<div class="cell " style="left:328px;top:444px;width:102px;height:32px"><span style="position:relative;top:1px">35*</span></div>
<div class="cell " style="left:431px;top:444px;width:94px;height:32px;background:#fefee2"><span style="position:relative;top:1px">-</span></div>
<div class="cell " style="left:526px;top:444px;width:201px;height:32px;background:#fefee2"><span style="position:relative;top:1px">-</span></div>
<div class="cell " style="left:728px;top:444px;width:124px;height:32px;background:#fefee2"><span style="position:relative;top:1px">-</span></div>
<div class="cell l" style="left:21px;top:477px;width:306px;height:32px;padding-left:3px"><span style="position:relative;top:1px">пособия на погребение и возмещение расходов
на погребение</span></div>
<div class="cell " style="left:328px;top:477px;width:102px;height:32px"><span style="position:relative;top:1px">36</span></div>
<div class="cell " style="left:431px;top:477px;width:94px;height:32px;background:#fefee2"><span style="position:relative;top:1px">-</span></div>
<div class="cell " style="left:526px;top:477px;width:201px;height:32px;background:#fefee2"><span style="position:relative;top:1px">-</span></div>
<div class="cell " style="left:728px;top:477px;width:124px;height:32px;background:#fefee2"><span style="position:relative;top:1px">-</span></div>
<div class="cell l" style="left:21px;top:510px;width:306px;height:32px;padding-left:3px"><span style="position:relative;top:1px">ежемесячные пособия семьям, воспитывающим
детей, - всего</span></div>
<div class="cell " style="left:328px;top:510px;width:102px;height:32px"><span style="position:relative;top:1px">37</span></div>
<div class="cell " style="left:431px;top:510px;width:94px;height:32px;background:#c0dcc0"><span style="position:relative;top:1px">-</span></div>
<div class="cell " style="left:526px;top:510px;width:201px;height:32px;background:#c0dcc0"><span style="position:relative;top:1px">-</span></div>
<div class="cell " style="left:728px;top:510px;width:124px;height:32px;background:#c0dcc0"><span style="position:relative;top:1px">-</span></div>
<div class="cell l" style="left:21px;top:543px;width:306px;height:32px;padding-left:3px"><span style="position:relative;top:1px"> в том числе:
 по уходу за ребенком в возрасте  до 3 лет</span></div>
<div class="cell " style="left:328px;top:543px;width:102px;height:32px"><span style="position:relative;top:1px">38</span></div>
<div class="cell " style="left:431px;top:543px;width:94px;height:32px;background:#fefee2"><span style="position:relative;top:1px">-</span></div>
<div class="cell " style="left:526px;top:543px;width:201px;height:32px;background:#fefee2"><span style="position:relative;top:1px">-</span></div>
<div class="cell " style="left:728px;top:543px;width:124px;height:32px;background:#fefee2"><span style="position:relative;top:1px">-</span></div>
<div class="cell l" style="left:21px;top:576px;width:306px;height:48px;padding-left:3px"><span style="position:relative;top:1px"><span style="display:inline-block;width:32.6px"></span>из них
<span style="display:inline-block;width:32.6px"></span>лицам, не подлежащим   социальному
<span style="display:inline-block;width:24.4px"></span>страхованию</span></div>
<div class="cell " style="left:328px;top:576px;width:102px;height:48px"><span style="position:relative;top:1px">39*</span></div>
<div class="cell " style="left:431px;top:576px;width:94px;height:48px;background:#fefee2"><span style="position:relative;top:1px">-</span></div>
<div class="cell " style="left:526px;top:576px;width:201px;height:48px;background:#fefee2"><span style="position:relative;top:1px">-</span></div>
<div class="cell " style="left:728px;top:576px;width:124px;height:48px;background:#fefee2"><span style="position:relative;top:1px">-</span></div>
<div class="cell l" style="left:21px;top:625px;width:306px;height:32px;padding-left:3px"><span style="position:relative;top:1px"><span style="display:inline-block;width:12.6px"></span>на детей старше 3 лет из отдельных категорий
семей</span></div>
<div class="cell " style="left:328px;top:625px;width:102px;height:32px"><span style="position:relative;top:1px">40</span></div>
<div class="cell " style="left:431px;top:625px;width:94px;height:32px;background:#fefee2"><span style="position:relative;top:1px">-</span></div>
<div class="cell " style="left:526px;top:625px;width:201px;height:32px;background:#fefee2"><span style="position:relative;top:1px">-</span></div>
<div class="cell " style="left:728px;top:625px;width:124px;height:32px;background:#fefee2"><span style="position:relative;top:1px">-</span></div>
<div class="cell l" style="left:21px;top:658px;width:306px;height:32px;padding-left:3px"><span style="position:relative;top:1px">на детей в возрасте от 3 до 18 лет в период
воспитания ребенка в возрасте до 3 лет</span></div>
<div class="cell " style="left:328px;top:658px;width:102px;height:32px"><span style="position:relative;top:1px">41</span></div>
<div class="cell " style="left:431px;top:658px;width:94px;height:32px;background:#fefee2"><span style="position:relative;top:1px">-</span></div>
<div class="cell " style="left:526px;top:658px;width:201px;height:32px;background:#fefee2"><span style="position:relative;top:1px">-</span></div>
<div class="cell " style="left:728px;top:658px;width:124px;height:32px;background:#fefee2"><span style="position:relative;top:1px">-</span></div>
<div class="cell l" style="left:21px;top:691px;width:306px;height:80px;padding-left:3px"><span style="position:relative;top:1px">оплата одного дополнительного свободного от
работы дня в месяц матери (мачехе) или отцу
(отчиму), опекуну (попечителю), воспитывающей
(воспитывающему) ребенка-инвалида в возрасте
до восемнадцати лет</span></div>
<div class="cell " style="left:328px;top:691px;width:102px;height:80px"><span style="position:relative;top:1px">42</span></div>
<div class="cell " style="left:431px;top:691px;width:94px;height:80px;background:#fefee2"><span style="position:relative;top:1px">-</span></div>
<div class="cell " style="left:526px;top:691px;width:201px;height:80px;background:#fefee2"><span style="position:relative;top:1px">-</span></div>
<div class="cell " style="left:728px;top:691px;width:124px;height:80px;background:#fefee2"><span style="position:relative;top:1px">-</span></div>
<div class="hl" style="left:20px;top:108px;width:833px"></div>
<div class="hl" style="left:20px;top:214px;width:833px"></div>
<div class="hl" style="left:20px;top:226px;width:833px"></div>
<div class="hl" style="left:20px;top:243px;width:833px"></div>
<div class="hl" style="left:20px;top:277px;width:833px"></div>
<div class="hl" style="left:20px;top:294px;width:833px"></div>
<div class="hl" style="left:20px;top:311px;width:833px"></div>
<div class="hl" style="left:20px;top:344px;width:833px"></div>
<div class="hl" style="left:20px;top:361px;width:833px"></div>
<div class="hl" style="left:20px;top:394px;width:833px"></div>
<div class="hl" style="left:20px;top:443px;width:833px"></div>
<div class="hl" style="left:20px;top:476px;width:833px"></div>
<div class="hl" style="left:20px;top:509px;width:833px"></div>
<div class="hl" style="left:20px;top:542px;width:833px"></div>
<div class="hl" style="left:20px;top:575px;width:833px"></div>
<div class="hl" style="left:20px;top:624px;width:833px"></div>
<div class="hl" style="left:20px;top:657px;width:833px"></div>
<div class="hl" style="left:20px;top:690px;width:833px"></div>
<div class="hl" style="left:20px;top:771px;width:833px"></div>
<div class="vl" style="left:20px;top:108px;height:664px"></div>
<div class="vl" style="left:327px;top:108px;height:664px"></div>
<div class="vl" style="left:430px;top:108px;height:664px"></div>
<div class="vl" style="left:525px;top:108px;height:664px"></div>
<div class="vl" style="left:727px;top:108px;height:664px"></div>
<div class="vl" style="left:852px;top:108px;height:664px"></div>
<div class="a" style="left:723px;top:221px;width:132px;height:25px;border:solid #ff0000;border-width:5px 5px 4px 5px;border-radius:1px"></div>
<div class="a" style="left:20px;top:781px;width:256px;height:1px;background:repeating-linear-gradient(90deg,#222 0 6px,transparent 6px 8px);background-position:-4px 0"></div>
<div class="a t" style="left:23px;top:783px;font-size:7.6px;line-height:10px;color:#606060">&lt;*&gt; По строке 31 отражаются данные о пособиях лицам, получающим профессионально-техническое, среднее специальное, высшее или научно-ориентированное образование в дневной форме получения образования, а также</div>
<div class="a t" style="left:23px;top:793px;font-size:7.6px;line-height:10px;color:#606060">проходящим подготовку в клинической ординатуре, резидентуре в очной форме; военнослужащим, лицам рядового и начальствующего состава органов внутренних дел, Следственного комитета, Государственного комитета</div>
<div class="a t" style="left:23px;top:803px;font-size:7.6px;line-height:10px;color:#606060">судебных экспертиз, органов финансовых расследований Комитета государственного контроля, органов и подразделений по чрезвычайным ситуациям.</div>
</div>
<div class="a" style="left:1889px;top:199px;width:8px;height:767px;background:#d4d4d4;border-radius:4px"></div>
<div class="a" style="left:1889px;top:584px;width:8px;height:129px;background:#999;border-radius:4px"></div>
<svg class="a" style="left:1889px;top:184px" width="8" height="6"><path d="M0.5 5 H7.5 L4 0.5 Z" fill="#444"/></svg>
<svg class="a" style="left:1889px;top:975px" width="8" height="6"><path d="M0.5 0.5 H7.5 L4 5 Z" fill="#444"/></svg>
<div class="a" style="left:223px;top:992px;width:1640px;height:8px;background:#d4d4d4;border-radius:4px"></div>
<div class="a" style="left:223px;top:992px;width:1548px;height:8px;background:#999;border-radius:4px"></div>
<svg class="a" style="left:208px;top:992px" width="6" height="8"><path d="M5 0.5 V7.5 L0.5 4 Z" fill="#bbb"/></svg>
<svg class="a" style="left:1873px;top:992px" width="6" height="8"><path d="M0.5 0.5 V7.5 L5 4 Z" fill="#444"/></svg>
<div class="a t" style="left:1392px;top:957px;font-size:20px;line-height:1;color:rgba(160,160,160,.72)">Активация Windows</div>
<div class="a t" style="left:1392px;top:982px;font-size:15.3px;line-height:1;color:rgba(168,168,168,.66);letter-spacing:-0.1px">Чтобы активировать Windows, перейдите в раздел "Параметры".</div>
<div class="a t" style="left:199px;top:1019px;font-size:13px;line-height:1;color:#4d4d4d">Комментарий:</div>
<div class="a" style="left:312px;top:1013px;width:410px;height:25px;border:1px solid #7d98b3;border-radius:3px;background:#fff"></div>
</body></html>
